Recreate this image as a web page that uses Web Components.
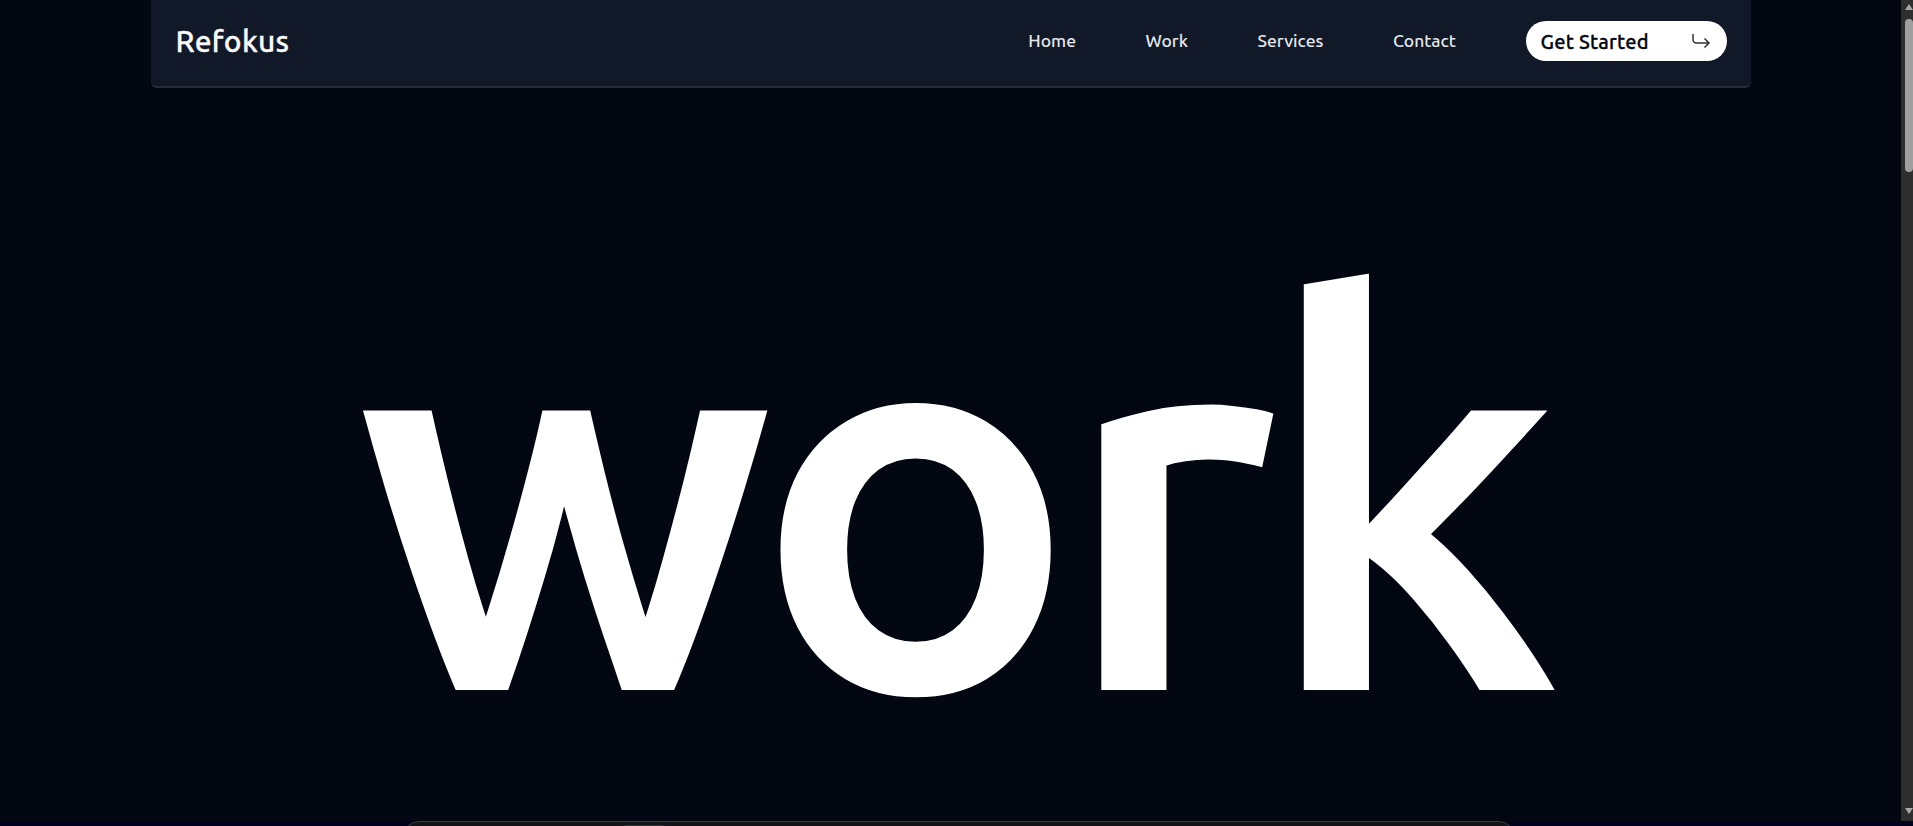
<!DOCTYPE html>
<html>
<head>
<meta charset="utf-8">
<title>Refokus</title>
<style>
  html, body {
    margin: 0;
    height: 100%;
    overflow: hidden;
    background: #030712;
  }
  body {
    display: flex;
    flex-direction: column;
    font-family: "Ubuntu", "Noto Sans", sans-serif;
  }
  .view {
    flex: 1;
    min-height: 0;
    display: flex;
  }
  .main {
    flex: 1;
    min-width: 0;
    display: flex;
    flex-direction: column;
  }
</style>
</head>
<body>

<template id="template-site-nav">
  <style>
    :host {
      display: flex;
      align-items: center;
      justify-content: space-between;
      box-sizing: border-box;
      flex: none;
      width: 1600px;
      height: 88px;
      margin: 0 auto;
      padding: 0 24px 4px 25px;
      background: #111827;
      border-bottom: 2px solid #272c38;
      border-radius: 0 0 6px 6px;
    }
    .logo {
      font-size: 30px;
      font-weight: 500;
      letter-spacing: 0.3px;
      color: #f9fafb;
      -webkit-text-stroke: 0.3px #f9fafb;
    }
    nav {
      display: flex;
      align-items: center;
      gap: 69.5px;
    }
  </style>
  <div class="logo"><slot name="logo"></slot></div>
  <nav><slot></slot></nav>
</template>

<template id="template-nav-link">
  <style>
    :host {
      display: block;
      padding-bottom: 1px;
      font-size: 17.5px;
      font-weight: 500;
      color: #e5e7eb;
    }
  </style>
  <slot></slot>
</template>

<template id="template-cta-button">
  <style>
    :host {
      display: flex;
      align-items: center;
      justify-content: space-between;
      box-sizing: border-box;
      width: 201px;
      height: 40px;
      padding: 0 16px 0 15px;
      background: #fff;
      border-radius: 20px;
      color: #030712;
      font-size: 20px;
      font-weight: 500;
      letter-spacing: 0.2px;
      -webkit-text-stroke: 0.3px #030712;
    }
    svg {
      display: block;
      width: 20px;
      height: 16px;
      fill: none;
      stroke: #333;
      stroke-width: 1.5;
    }
  </style>
  <slot></slot>
  <svg viewBox="0 0 20 16"><path d="M2 1v5.500a3.500 3.500 0 0 0 3.500 3.500H18M13.500 5.500 18 10l-4.500 4.500"/></svg>
</template>

<template id="template-hero-word">
  <style>
    :host {
      display: flex;
      flex: 1;
      min-height: 0;
      box-sizing: border-box;
      align-items: center;
      justify-content: center;
      padding: 72px 4px 0 0;
      font-size: 545px;
      font-weight: 700;
      line-height: 1;
      color: #fff;
      letter-spacing: -21.5px;
      /* page colour stroke eats into the bold, the reference is a bit lighter */
      -webkit-text-stroke: 6px #030712;
      overflow: hidden;
    }
  </style>
  <slot></slot>
</template>

<template id="template-page-scrollbar">
  <style>
    :host {
      display: flex;
      flex-direction: column;
      align-items: flex-end;
      flex: none;
      box-sizing: border-box;
      width: 12px;
      padding: 4px 0 7px;
      background: #2e2e2e;
    }
    .up, .down {
      flex: none;
      width: 8px;
      height: 6px;
      background: #a8a8a8;
    }
    .up { clip-path: polygon(50% 0, 100% 100%, 0 100%); }
    .down { clip-path: polygon(0 0, 100% 0, 50% 100%); }
    .thumb {
      flex: none;
      width: 8px;
      height: 153px;
      margin-top: 9px;
      background: #a0a0a0;
      border-radius: 4px;
    }
    .rest { flex: 1; }
  </style>
  <div class="up"></div>
  <div class="thumb"></div>
  <div class="rest"></div>
  <div class="down"></div>
</template>

<template id="template-next-section">
  <style>
    :host {
      display: block;
      flex: none;
      box-sizing: border-box;
      height: 5px;
      padding-left: 403px;
      background: #00001c;
      overflow: hidden;
    }
    .card {
      box-sizing: border-box;
      width: 1112px;
      height: 40px;
      padding-top: 3px;
      background: #141418;
      border: 1px solid #3c3c42;
      border-radius: 16px 16px 0 0;
    }
    .chip {
      width: 42px;
      height: 20px;
      margin-left: 219px;
      background: #33333a;
      border-radius: 3px;
    }
  </style>
  <div class="card"><div class="chip"></div></div>
</template>

<div class="view">
  <div class="main">
    <site-nav>
      <span slot="logo">Refokus</span>
      <nav-link>Home</nav-link>
      <nav-link>Work</nav-link>
      <nav-link>Services</nav-link>
      <nav-link>Contact</nav-link>
      <cta-button>Get Started</cta-button>
    </site-nav>
    <hero-word>work</hero-word>
  </div>
  <page-scrollbar></page-scrollbar>
</div>
<next-section></next-section>

<script>
  (function(){
    // every element just stamps its template into an open shadow root
    function register(name) {
      const content = document.querySelector('template#template-' + name).content;
      customElements.define(name, class extends HTMLElement {
        connectedCallback() {
          if (!this.shadowRoot) {
            this.attachShadow({mode: 'open'}).appendChild(content.cloneNode(true));
          }
        }
      });
    }

    ['site-nav', 'nav-link', 'cta-button', 'hero-word', 'page-scrollbar', 'next-section'].forEach(register);
  })();
</script>
</body>
</html>
